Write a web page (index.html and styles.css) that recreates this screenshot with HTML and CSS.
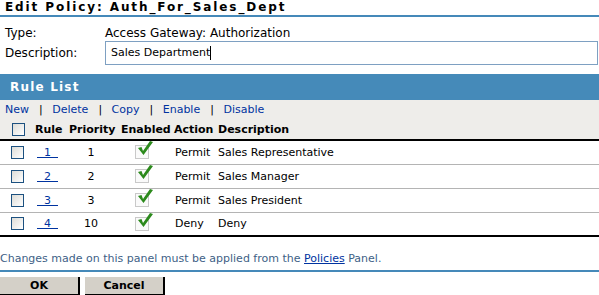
FILE: index.html
```html
<!DOCTYPE html>
<html lang="en">
<head>
    <meta charset="UTF-8">
    <title>Edit Policy</title>
    <link rel="stylesheet" href="styles.css">
</head>
<body>
    <h1 class="page-title">Edit Policy: Auth_For_Sales_Dept</h1>

    <div class="field-row type-row">
        <span class="field-label">Type:</span>
        <span class="field-value">Access Gateway: Authorization</span>
    </div>
    <div class="field-row">
        <span class="field-label">Description:</span>
        <div class="text-box">Sales Department<span class="caret"></span></div>
    </div>

    <div class="section-bar">Rule List</div>
    <div class="toolbar">
        <div class="actions">
            <a href="#">New</a><span class="sep">|</span>
            <a href="#">Delete</a><span class="sep">|</span>
            <a href="#">Copy</a><span class="sep">|</span>
            <a href="#">Enable</a><span class="sep">|</span>
            <a href="#">Disable</a>
        </div>
    </div>

    <table class="rule-table">
        <thead>
            <tr>
                <th class="col-check"><span class="checkbox"></span></th>
                <th class="col-rule">Rule</th>
                <th class="col-priority">Priority</th>
                <th class="col-enabled">Enabled</th>
                <th class="col-action">Action</th>
                <th>Description</th>
            </tr>
        </thead>
        <tbody>
            <tr>
                <td class="col-check"><span class="checkbox"></span></td>
                <td class="col-rule"><a href="#">&nbsp;&nbsp;1&nbsp;&nbsp;</a></td>
                <td class="col-priority">1</td>
                <td class="col-enabled"><span class="enabled-icon"><svg width="18" height="18" viewBox="0 0 18 18"><path d="M2 8 L5.5 7 L7 11 L14 1 L17 2 L7.5 15 Z" fill="#2c8a1c"/></svg></span></td>
                <td class="col-action">Permit</td>
                <td>Sales Representative</td>
            </tr>
            <tr>
                <td class="col-check"><span class="checkbox"></span></td>
                <td class="col-rule"><a href="#">&nbsp;&nbsp;2&nbsp;&nbsp;</a></td>
                <td class="col-priority">2</td>
                <td class="col-enabled"><span class="enabled-icon"><svg width="18" height="18" viewBox="0 0 18 18"><path d="M2 8 L5.5 7 L7 11 L14 1 L17 2 L7.5 15 Z" fill="#2c8a1c"/></svg></span></td>
                <td class="col-action">Permit</td>
                <td>Sales Manager</td>
            </tr>
            <tr>
                <td class="col-check"><span class="checkbox"></span></td>
                <td class="col-rule"><a href="#">&nbsp;&nbsp;3&nbsp;&nbsp;</a></td>
                <td class="col-priority">3</td>
                <td class="col-enabled"><span class="enabled-icon"><svg width="18" height="18" viewBox="0 0 18 18"><path d="M2 8 L5.5 7 L7 11 L14 1 L17 2 L7.5 15 Z" fill="#2c8a1c"/></svg></span></td>
                <td class="col-action">Permit</td>
                <td>Sales President</td>
            </tr>
            <tr>
                <td class="col-check"><span class="checkbox"></span></td>
                <td class="col-rule"><a href="#">&nbsp;&nbsp;4&nbsp;&nbsp;</a></td>
                <td class="col-priority">10</td>
                <td class="col-enabled"><span class="enabled-icon"><svg width="18" height="18" viewBox="0 0 18 18"><path d="M2 8 L5.5 7 L7 11 L14 1 L17 2 L7.5 15 Z" fill="#2c8a1c"/></svg></span></td>
                <td class="col-action">Deny</td>
                <td>Deny</td>
            </tr>
        </tbody>
    </table>

    <p class="note">Changes made on this panel must be applied from the <a href="#">Policies</a> Panel.</p>

    <div class="button-bar">
        <button class="btn">OK</button>
        <button class="btn">Cancel</button>
    </div>
</body>
</html>
```

FILE: styles.css
```css
* {
    margin: 0;
    padding: 0;
    box-sizing: border-box;
}
body {
    font-family: 'DejaVu Sans', Verdana, sans-serif;
    font-size: 11px;
    color: #000;
    background: #fff;
    width: 599px;
    overflow: hidden;
}
a {
    color: #0033a0;
    text-decoration: none;
}
.page-title {
    font-size: 12px;
    font-weight: bold;
    letter-spacing: 1.9px;
    padding: 0 0 1px 5px;
    height: 17px;
    line-height: 14px;
    border-bottom: 2px solid #4589b9;
}
.field-row {
    display: flex;
    align-items: center;
    padding-left: 5px;
}
.type-row {
    margin-top: 7px;
    height: 17px;
}
.field-label {
    width: 100px;
    font-size: 12px;
}
.field-value {
    font-size: 12px;
}
.text-box {
    flex: 1;
    height: 24px;
    border: 1px solid #7ea0c2;
    padding: 0 5px;
    line-height: 22px;
    font-size: 11px;
    display: flex;
    align-items: center;
    margin-right: 1px;
}
.caret {
    display: inline-block;
    width: 1px;
    height: 14px;
    background: #000;
}
.section-bar {
    margin-top: 9px;
    height: 26px;
    line-height: 26px;
    background: #458ab9;
    color: #fff;
    font-size: 12px;
    font-weight: bold;
    letter-spacing: 1.2px;
    padding-left: 10px;
}
.toolbar {
    background: #eeedea;
    height: 19px;
    padding-left: 5px;
    line-height: 19px;
}
.actions .sep {
    margin: 0 6px 0 10px;
    color: #000;
}
.rule-table {
    width: 100%;
    border-collapse: collapse;
    table-layout: fixed;
}
.rule-table thead tr {
    background: #eeedea;
    border-bottom: 2px solid #000;
}
.rule-table th {
    height: 21px;
    text-align: left;
    padding-left: 4px;
    font-weight: bold;
    vertical-align: middle;
}
.rule-table td {
    height: 24px;
    padding-left: 4px;
    border-bottom: 1px solid #b4b4b4;
    vertical-align: middle;
    white-space: nowrap;
}
.rule-table tbody tr:last-child td {
    border-bottom: 2px solid #000;
}
.rule-table .col-check {
    width: 31px;
    padding-left: 11px;
}
.rule-table .col-rule { width: 34px; }
.rule-table .col-priority { width: 52px; }
.rule-table .col-enabled { width: 53px; }
.rule-table .col-action { width: 44px; }
.rule-table td.col-rule {
    padding-left: 6px;
}
.rule-table td.col-rule a {
    text-decoration: underline;
}
.rule-table td.col-priority {
    text-align: center;
    padding-left: 0;
}
.rule-table td.col-enabled {
    padding-left: 18px;
}
.rule-table td.col-action {
    padding-left: 5px;
}
.checkbox {
    display: block;
    width: 13px;
    height: 13px;
    border: 1px solid #1c5180;
    background: linear-gradient(135deg, #dcdcd7, #fff);
}
.rule-table th .checkbox {
    margin-left: 1px;
}
.enabled-icon {
    position: relative;
    display: block;
    width: 14px;
    height: 14px;
    border: 1px solid #c9c9c9;
    background: #fafafa;
}
.enabled-icon svg {
    position: absolute;
    left: 0;
    top: -6px;
}
.note {
    margin-top: 15px;
    padding-bottom: 4px;
    color: #3e5f86;
    line-height: 14px;
    border-bottom: 2px solid #4589b9;
}
.note a {
    color: #0033a0;
    text-decoration: underline;
}
.button-bar {
    display: flex;
    gap: 5px;
    padding-top: 5px;
}
.btn {
    width: 80px;
    height: 18px;
    background: #d4d0c8;
    border: none;
    border-right: 2px solid #000;
    border-bottom: 1px solid #000;
    font-family: 'DejaVu Sans', Verdana, sans-serif;
    font-size: 11px;
    font-weight: bold;
}
```
